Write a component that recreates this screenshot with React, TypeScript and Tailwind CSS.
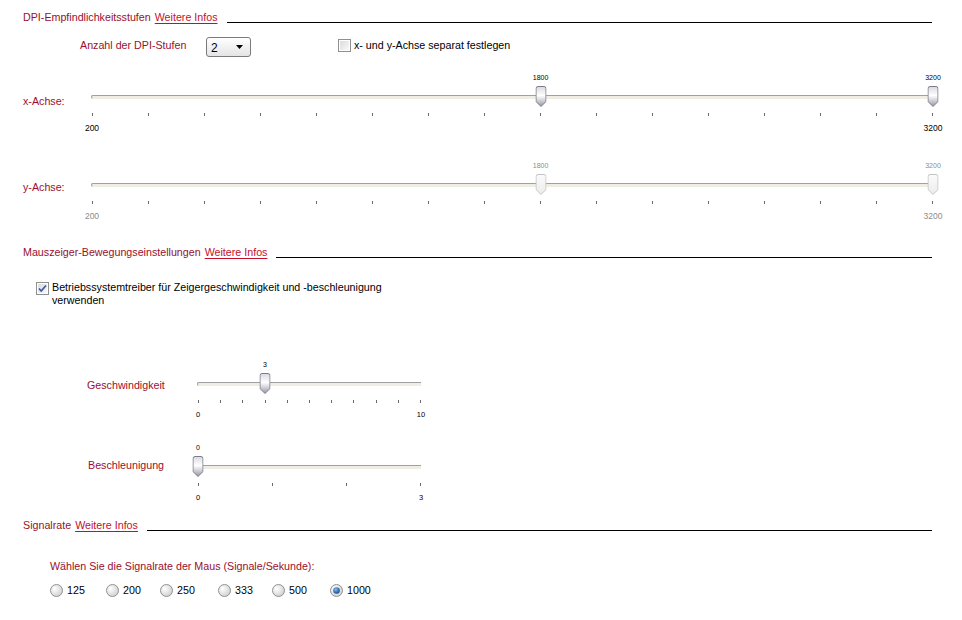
import React from 'react';

// colours taken from the dialog
const labelRed = 'text-[#990f2d]';

const Thumb: React.FC<{ disabled?: boolean }> = ({ disabled }) => (
  <svg width="11" height="21" viewBox="0 0 11 21">
    <defs>
      <linearGradient id="thumbOn" x1="0" y1="0" x2="0" y2="1">
        <stop offset="0" stopColor="#d8d8e2" />
        <stop offset="0.45" stopColor="#ffffff" />
        <stop offset="1" stopColor="#9696a8" />
      </linearGradient>
      <linearGradient id="thumbOff" x1="0" y1="0" x2="0" y2="1">
        <stop offset="0" stopColor="#fbfbfb" />
        <stop offset="1" stopColor="#ececec" />
      </linearGradient>
    </defs>
    <path
      d="M0.5 2.5 Q0.5 0.5 2.5 0.5 H8.5 Q10.5 0.5 10.5 2.5 V15.5 L5.5 20.5 L0.5 15.5 Z"
      fill={disabled ? 'url(#thumbOff)' : 'url(#thumbOn)'}
      stroke={disabled ? '#c4c4c4' : '#7c7c86'}
      strokeWidth="1"
    />
  </svg>
);

type SliderProps = {
  widthClass: string;
  min: number;
  max: number;
  ticks: number;
  values: number[];
  disabled?: boolean;
  edgeClass: string;
};

const Slider: React.FC<SliderProps> = ({ widthClass, min, max, ticks, values, disabled, edgeClass }) => {
  const pct = (v: number) => ((v - min) / (max - min)) * 100;
  const textTone = disabled ? 'text-[#8c8c8c]' : 'text-black';

  return (
    <div className={`relative h-[62px] ${widthClass}`}>
      {values.map((v) => (
        <div
          key={`v${v}`}
          className={`absolute top-0 -translate-x-1/2 text-[7px] leading-[10px] ${textTone}`}
          style={{ left: `${pct(v)}%` }}
        >
          {v}
        </div>
      ))}
      <div className="mt-[22px] -ml-px h-[4px] rounded-l-[2px] border-t border-l border-[#a0a0a0] bg-[#efede4]" />
      {values.map((v) => (
        <div key={`t${v}`} className="absolute top-[13px] -translate-x-1/2" style={{ left: `${pct(v)}%` }}>
          <Thumb disabled={disabled} />
        </div>
      ))}
      <div className="mt-[14px] flex justify-between">
        {Array.from({ length: ticks }).map((_, i) => (
          <div key={i} className="h-[3px] w-px bg-[#6a6a6a]" />
        ))}
      </div>
      <div className={`-mx-[15px] mt-[7px] flex justify-between leading-[10px] ${edgeClass} ${textTone}`}>
        <span className="w-[30px] text-center">{min}</span>
        <span className="w-[30px] text-center">{max}</span>
      </div>
    </div>
  );
};

const SectionHeader: React.FC<{ title: string }> = ({ title }) => (
  <div className="flex h-[14px] items-center pl-[23px] pr-[30px]">
    <span className={labelRed}>{title}</span>
    <a className="ml-[4px] text-[#c40f2c] underline decoration-[#c40f2c] underline-offset-[2px]">Weitere Infos</a>
    <div className="ml-[9px] mt-[10px] h-px flex-1 bg-black" />
  </div>
);

const CheckBox: React.FC<{ checked?: boolean }> = ({ checked }) => (
  <svg width="13" height="13" viewBox="0 0 13 13" className="shrink-0">
    <defs>
      <linearGradient id="cbFill" x1="0" y1="0" x2="1" y2="1">
        <stop offset="0" stopColor="#dcdcdc" />
        <stop offset="1" stopColor="#f8f8f8" />
      </linearGradient>
    </defs>
    <rect x="0.5" y="0.5" width="12" height="12" fill="#fff" stroke="#8e8f8f" />
    <rect x="2" y="2" width="9" height="9" fill="url(#cbFill)" />
    {checked && <path d="M3 6.5 L5.2 9 L10 3.5" fill="none" stroke="#3c5aa8" strokeWidth="1.8" />}
  </svg>
);

const Radio: React.FC<{ checked?: boolean }> = ({ checked }) => (
  <svg width="13" height="13" viewBox="0 0 13 13" className="shrink-0">
    <defs>
      <radialGradient id="rdFill" cx="0.35" cy="0.35" r="0.8">
        <stop offset="0" stopColor="#ffffff" />
        <stop offset="1" stopColor="#c9c9c9" />
      </radialGradient>
      <radialGradient id="rdDot" cx="0.4" cy="0.35" r="0.7">
        <stop offset="0" stopColor="#7fc0f2" />
        <stop offset="1" stopColor="#0d3f86" />
      </radialGradient>
    </defs>
    <circle cx="6.5" cy="6.5" r="6" fill="url(#rdFill)" stroke="#929292" />
    {checked && <circle cx="6.5" cy="6.5" r="3.3" fill="url(#rdDot)" />}
  </svg>
);

const rates = [
  { v: 125, w: 'w-[56px]' },
  { v: 200, w: 'w-[54px]' },
  { v: 250, w: 'w-[58px]' },
  { v: 333, w: 'w-[54px]' },
  { v: 500, w: 'w-[58px]' },
  { v: 1000, w: 'w-[60px]' },
];

export default function App() {
  return (
    <div className="h-[620px] w-[962px] overflow-hidden bg-white pt-[10px] font-['Liberation_Sans',Arial,sans-serif] text-[10.7px] leading-[14px] text-black">
      <SectionHeader title="DPI-Empfindlichkeitsstufen" />

      <div className="mt-[13px] flex h-[20px] items-center pl-[80px]">
        <span className={`w-[126px] -mt-[4px] ${labelRed}`}>Anzahl der DPI-Stufen</span>
        <div className="flex h-[20px] w-[45px] items-center justify-between rounded-[3px] border border-[#7b7b7b] bg-gradient-to-b from-white to-[#e4e4e4] pl-[4px] pr-[7px]">
          <span className="mt-[2px] text-[12px]">2</span>
          <svg width="7" height="4" viewBox="0 0 7 4">
            <path d="M0 0 H7 L3.5 4 Z" fill="#000" />
          </svg>
        </div>
        <div className="ml-[87px] flex items-center gap-[3px] -mt-[4px]">
          <CheckBox />
          <span>x- und y-Achse separat festlegen</span>
        </div>
      </div>

      <div className="mt-[16px] flex">
        <div className={`w-[92px] shrink-0 pl-[23px] pt-[21px] ${labelRed}`}>x-Achse:</div>
        <Slider widthClass="w-[841px]" min={200} max={3200} ticks={16} values={[1800, 3200]} edgeClass="text-[8.5px]" />
      </div>

      <div className="mt-[26px] flex">
        <div className={`w-[92px] shrink-0 pl-[23px] pt-[19px] ${labelRed}`}>y-Achse:</div>
        <Slider widthClass="w-[841px]" min={200} max={3200} ticks={16} values={[1800, 3200]} disabled edgeClass="text-[8.5px]" />
      </div>

      <div className="mt-[22px]">
        <SectionHeader title="Mauszeiger-Bewegungseinstellungen" />
      </div>

      <div className="mt-[22px] flex items-start gap-[3px] pl-[36px] leading-[13px]">
        <div className="mt-[1px]">
          <CheckBox checked />
        </div>
        <span className="w-[340px]">Betriebssystemtreiber für Zeigergeschwindigkeit und -beschleunigung verwenden</span>
      </div>

      <div className="mt-[53px] flex">
        <div className={`w-[198px] shrink-0 pl-[87px] pt-[18px] ${labelRed}`}>Geschwindigkeit</div>
        <Slider widthClass="w-[223px]" min={0} max={10} ticks={11} values={[3]} edgeClass="text-[7.5px]" />
      </div>

      <div className="mt-[21px] flex">
        <div className={`w-[198px] shrink-0 pl-[88px] pt-[15px] ${labelRed}`}>Beschleunigung</div>
        <Slider widthClass="w-[223px]" min={0} max={3} ticks={4} values={[0]} edgeClass="text-[7.5px]" />
      </div>

      <div className="mt-[13px]">
        <SectionHeader title="Signalrate" />
      </div>

      <div className={`mt-[27px] pl-[50px] ${labelRed}`}>Wählen Sie die Signalrate der Maus (Signale/Sekunde):</div>

      <div className="mt-[10px] flex pl-[50px]">
        {rates.map((r) => (
          <div key={r.v} className={`flex items-center gap-[4px] ${r.w}`}>
            <Radio checked={r.v === 1000} />
            <span>{r.v}</span>
          </div>
        ))}
      </div>
    </div>
  );
}
